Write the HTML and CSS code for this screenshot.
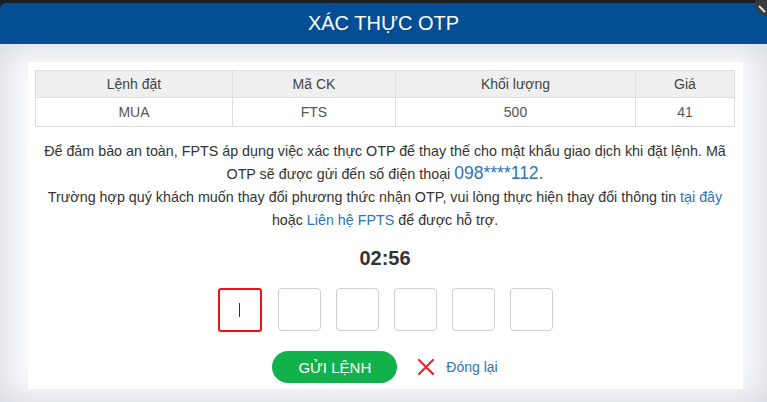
FILE: index.html
```html
<!DOCTYPE html>
<html lang="vi">
<head>
    <meta charset="UTF-8">
    <meta name="viewport" content="width=device-width, initial-scale=1.0">
    <title>Xác thực OTP</title>
    <link rel="stylesheet" href="styles.css">
</head>
<body>
    <div class="topbar"></div>
    <svg class="close-dot" width="24" height="24" viewBox="0 0 24 24">
        <circle cx="12" cy="12" r="12" fill="#3a3b3d"/>
        <path d="M4 14 L10 20" stroke="#ddd" stroke-width="2"/>
    </svg>
    <div id="modal">
        <div class="modal-header">XÁC THỰC OTP</div>
        <div class="modal-body">
            <div class="panel">
                <table class="order">
                    <thead>
                        <tr>
                            <th class="c1">Lệnh đặt</th>
                            <th class="c2">Mã CK</th>
                            <th class="c3">Khối lượng</th>
                            <th class="c4">Giá</th>
                        </tr>
                    </thead>
                    <tbody>
                        <tr>
                            <td>MUA</td>
                            <td>FTS</td>
                            <td>500</td>
                            <td>41</td>
                        </tr>
                    </tbody>
                </table>
                <p class="note">
                    Để đảm bảo an toàn, FPTS áp dụng việc xác thực OTP để thay thế cho mật khẩu giao dịch khi đặt lệnh. Mã OTP sẽ được gửi đến số điện thoại <span class="phone">098****112.</span><br>
                    Trường hợp quý khách muốn thay đổi phương thức nhận OTP, vui lòng thực hiện thay đổi thông tin <a href="#">tại đây</a> hoặc <a href="#">Liên hệ FPTS</a> để được hỗ trợ.
                </p>
                <div class="timer">02:56</div>
                <div class="otp">
                    <div class="otp-box active"><span class="caret"></span></div>
                    <div class="otp-box"></div>
                    <div class="otp-box"></div>
                    <div class="otp-box"></div>
                    <div class="otp-box"></div>
                    <div class="otp-box"></div>
                </div>
                <div class="actions">
                    <button type="button" class="btn-send">GỬI LỆNH</button>
                    <a href="#" class="btn-close">
                        <svg width="18" height="18" viewBox="0 0 18 18">
                            <path d="M2 2 L16 16 M16 2 L2 16" stroke="#e8262c" stroke-width="2.2" stroke-linecap="round"/>
                        </svg>
                        Đóng lại
                    </a>
                </div>
            </div>
        </div>
    </div>
</body>
</html>
```
FILE: styles.css
```css
body {
    font-family: Arial, "Liberation Sans", sans-serif;
    background-color: #1e1f21;
    margin: 0;
    padding: 0;
    height: 402px;
    overflow: hidden;
    position: relative;
}
.topbar {
    height: 3px;
    background-color: #1e1f21;
}
.close-dot {
    position: absolute;
    top: -8px;
    right: -12px;
    z-index: 2;
}
#modal {
    border-radius: 6px 0 0 0;
    overflow: hidden;
}
.modal-header {
    height: 41px;
    line-height: 41px;
    background-color: #044e96;
    color: #fff;
    font-size: 20px;
    text-align: center;
}
.modal-body {
    background-color: #fbfbfc;
    box-shadow: inset 0 0 36px rgba(196, 203, 214, 0.8);
    padding: 18px 24px 13px 28px;
}
.panel {
    background-color: #fff;
    padding: 8px 8px 8px 7px;
    height: 311px;
}
.order {
    width: 700px;
    border-collapse: collapse;
    font-size: 14px;
    color: #555;
}
.order th, .order td {
    border: 1px solid #dddddd;
    text-align: center;
    font-weight: normal;
    padding: 0;
}
.order th {
    background-color: #efefef;
    height: 26px;
    color: #444;
}
.order td {
    height: 28px;
}
.c1 { width: 196px; }
.c2 { width: 162px; }
.c3 { width: 239px; }
.note {
    margin: 13px 0 0 0;
    text-align: center;
    font-size: 14.3px;
    line-height: 23px;
    color: #333;
}
.phone {
    color: #2f72b6;
    font-size: 17.5px;
    line-height: 18px;
}
.note a {
    color: #2f72b6;
    text-decoration: none;
}
.timer {
    margin-top: 14px;
    text-align: center;
    font-size: 20px;
    font-weight: bold;
    color: #333;
    line-height: 24px;
}
.otp {
    display: flex;
    justify-content: center;
    gap: 15px;
    margin-top: 18px;
}
.otp-box {
    width: 41px;
    height: 41px;
    border: 1px solid #cfcfcf;
    border-radius: 4px;
    display: flex;
    align-items: center;
    justify-content: center;
}
.otp-box.active {
    width: 40px;
    height: 40px;
    border: 2px solid #ee1111;
    border-radius: 3px;
    margin-right: 1px;
}
.caret {
    width: 1px;
    height: 14px;
    background-color: #333;
}
.actions {
    display: flex;
    justify-content: center;
    align-items: center;
    margin-top: 19px;
}
.btn-send {
    width: 125px;
    height: 32px;
    border: none;
    border-radius: 16px;
    background-color: #13b14c;
    color: #fff;
    font-family: Arial, "Liberation Sans", sans-serif;
    font-size: 15px;
    cursor: pointer;
}
.btn-close {
    display: flex;
    align-items: center;
    gap: 11px;
    margin-left: 20px;
    color: #2f72b6;
    font-size: 14px;
    text-decoration: none;
}
```
